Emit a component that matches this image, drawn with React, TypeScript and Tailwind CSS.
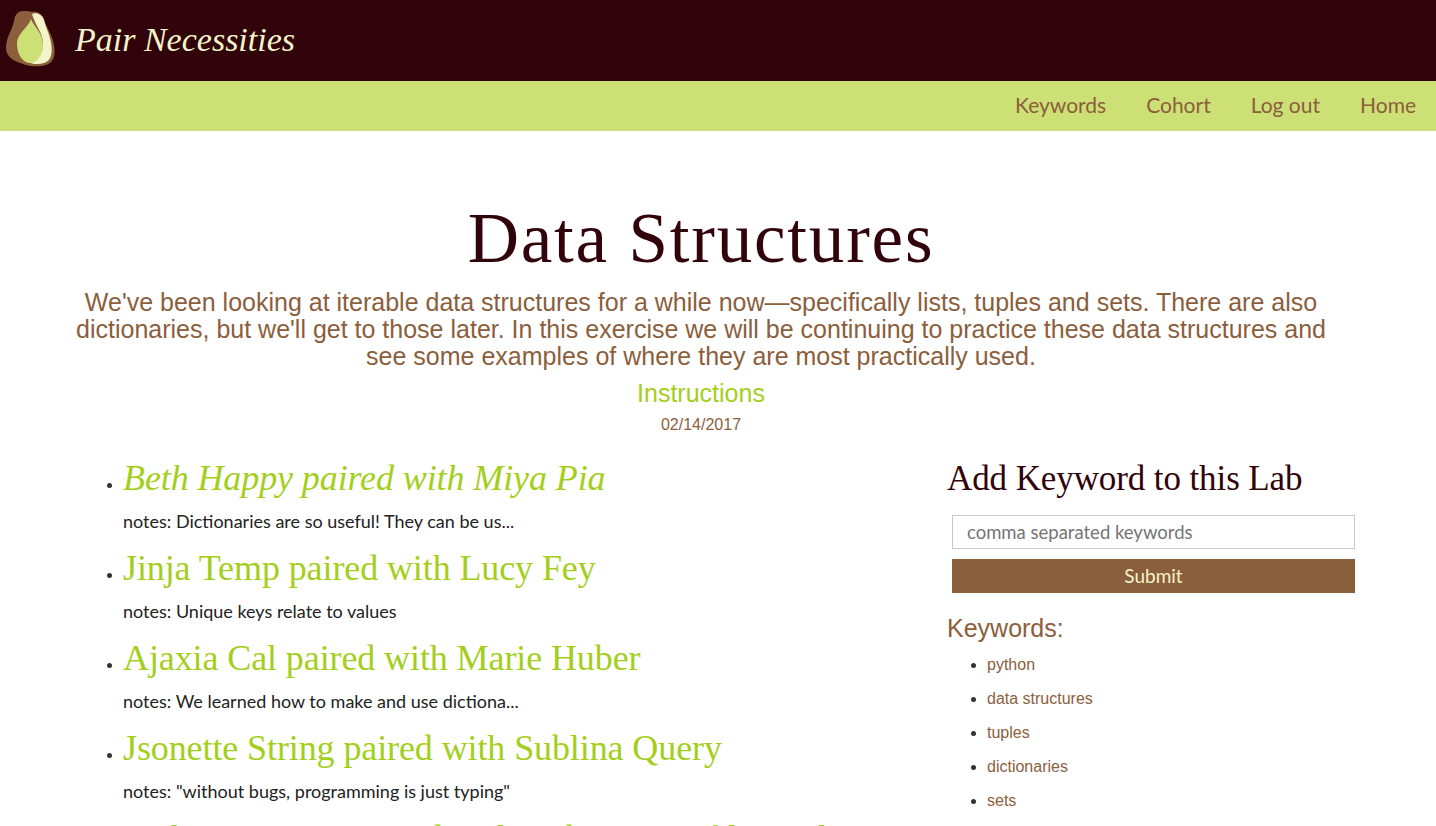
const pairs = [
  { name: "Beth Happy paired with Miya Pia", notes: "notes: Dictionaries are so useful! They can be us...", italic: true },
  { name: "Jinja Temp paired with Lucy Fey", notes: "notes: Unique keys relate to values" },
  { name: "Ajaxia Cal paired with Marie Huber", notes: "notes: We learned how to make and use dictiona..." },
  { name: "Jsonette String paired with Sublina Query", notes: 'notes: "without bugs, programming is just typing"' },
  { name: "Pythonia Script paired with Rubina Gemfile Hash", notes: "notes: Tuples are immutable" },
];
const keywords = ["python", "data structures", "tuples", "dictionaries", "sets"];
const heading = "font-['Liberation_Serif',serif]";
const raleway = "font-['Lato','Noto_Sans',sans-serif]";

export default function App() {
  return (
    <div className="h-[826px] overflow-hidden bg-white font-['Liberation_Sans',Arial,sans-serif]">
      <header className="flex h-[81px] items-center bg-[#31030b] pl-[6px]">
        <svg width="50" height="56" viewBox="0 0 50 56" className="mt-[-4px]">
          <path d="M18 0C12 0 9 3 8 10C6 20 0 26 0 37C0 47 10 51 20 54C28 56 40 56 45 51C50 46 49 38 47 30C45 22 40 16 38 8C36 2 30 0 26 1C24 0 21 0 18 0Z" fill="#8b5e3c" />
          <path d="M26 3C30 1 36 3 38 9C40 17 44 24 45 32C47 42 45 50 38 52C32 54 26 53 22 51C31 49 37 42 37 33C37 22 30 16 26 3Z" fill="#f3f4c9" />
          <path d="M25 8C28 16 37 22 37 34C37 45 30 52 24 52C18 52 11 45 11 33C11 22 22 17 25 8Z" fill="#cde076" />
        </svg>
        <span className="ml-[19px] mt-[-1px] font-['Liberation_Serif',serif] text-[34px] italic leading-none text-[#f3f4c9]">Pair Necessities</span>
      </header>
      <nav className={`flex h-[50px] items-center justify-end gap-[40px] bg-[#cde076] pb-[2px] pr-[20px] text-[21px] text-[#8b5e3c] ${raleway}`}>
        <a>Keywords</a>
        <a>Cohort</a>
        <a>Log out</a>
        <a>Home</a>
      </nav>
      <main className="w-[1402px] pt-[67px]">
        <h1 className={`text-center text-[71px] leading-[80px] tracking-[1.8px] text-[#31030b] ${heading}`}>Data Structures</h1>
        <p className="mx-auto mt-[11px] w-[1260px] text-center text-[25px] leading-[27px] text-[#8b5e3c]">
          We've been looking at iterable data structures for a while now—specifically lists, tuples and sets. There are also dictionaries, but we'll get to those later. In this exercise we will be continuing to practice these data structures and see some examples of where they are most practically used.
        </p>
        <div className="mt-[7px] text-center text-[25px] leading-[32px] text-[#a3cf1c]">Instructions</div>
        <div className="mt-[6px] text-center text-[16px] leading-[20px] text-[#8b5e3c]">02/14/2017</div>
        <div className="mt-[20px] flex">
          <ul className="w-[947px] list-disc pl-[123px]">
            {pairs.map((p) => (
              <li key={p.name} className="h-[90px] pt-[1px] marker:text-[#333]">
                <div className={`text-[36px] leading-[45px] tracking-[-0.1px] text-[#a3cf1c] ${heading} ${p.italic ? "italic" : ""}`}>{p.name}</div>
                <div className={`mt-[10px] text-[18px] leading-[20px] text-[#222] ${raleway}`}>{p.notes}</div>
              </li>
            ))}
          </ul>
          <aside className="w-[408px]">
            <h2 className={`pt-[1px] text-[35px] leading-[45px] tracking-[-0.1px] text-[#31030b] ${heading}`}>Add Keyword to this Lab</h2>
            <div className="ml-[5px] mt-[14px] w-[403px]">
              <input placeholder="comma separated keywords" className={`h-[34px] w-full border border-[#c8c8c8] px-[14px] text-[18.5px] placeholder:text-[#757575] ${raleway}`} />
              <button className={`mt-[10px] block h-[34px] w-full bg-[#8b5e3c] text-[19px] text-[#f3f4c9] ${raleway}`}>Submit</button>
            </div>
            <h3 className="mt-[19px] text-[25px] leading-[32px] text-[#8b5e3c]">Keywords:</h3>
            <ul className="mt-[4px] list-disc pl-[40px]">
              {keywords.map((k) => (
                <li key={k} className="h-[34px] text-[16px] leading-[34px] text-[#8b5e3c] marker:text-[#333]">{k}</li>
              ))}
            </ul>
          </aside>
        </div>
      </main>
    </div>
  );
}
